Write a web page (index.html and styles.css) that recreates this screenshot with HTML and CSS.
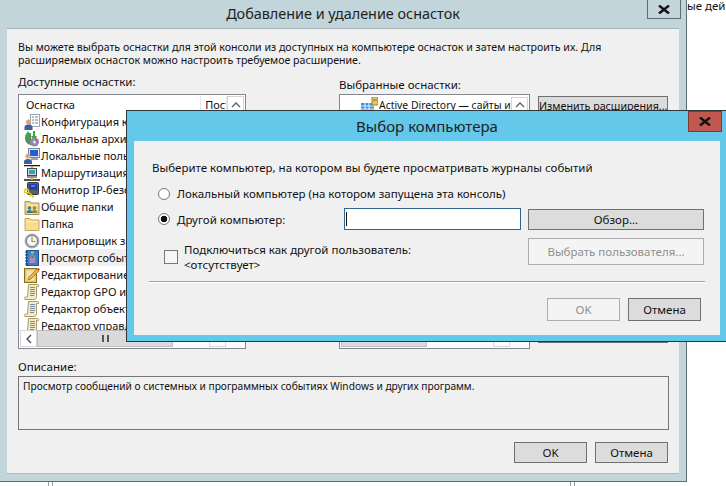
FILE: index.html
```html
<!DOCTYPE html>
<html lang="ru">
<head>
<meta charset="utf-8">
<title>Добавление и удаление оснасток</title>
<link rel="stylesheet" href="styles.css">
</head>
<body>
<svg class="defs" width="0" height="0" aria-hidden="true">
  <symbol id="i-config" viewBox="0 0 16 16">
    <rect x="6.5" y="0.5" width="9" height="12" fill="#fff" stroke="#9aa5b5"/>
    <path d="M8 3h2M11 3h3M8 6h2M11 6h3M8 9h2M11 9h3" stroke="#6b7c9a"/>
    <circle cx="4.5" cy="8" r="2.6" fill="#d9a878"/>
    <path d="M0.5 16v-3c0-1.500 1.500-2.500 4-2.500s4 1 4 2.500v3z" fill="#3d5f9c"/>
  </symbol>
  <symbol id="i-archive" viewBox="0 0 16 16">
    <path d="M1 7c0-3 3-5 6-5v12c-3 0-6-3-6-7z" fill="#6d7f6c"/>
    <path d="M4 0l3 5H5v6H3V5H1z" fill="#27b33a"/>
    <path d="M10 10l-3-5h2V0h2v5h2z" fill="#27b33a"/>
    <circle cx="10.500" cy="11" r="4.500" fill="#8a8fa8"/>
    <circle cx="10.500" cy="11" r="1.500" fill="#e8e8f0"/>
    <path d="M10.500 7a4 4 0 0 1 4 4h-2.500z" fill="#c95f8c"/>
  </symbol>
  <symbol id="i-users" viewBox="0 0 16 16">
    <rect x="4.500" y="0.500" width="11" height="9" fill="#dfe3ea" stroke="#7c8698"/>
    <rect x="6" y="2" width="8" height="6" fill="#1f5fd6"/>
    <rect x="7" y="10" width="7" height="2" fill="#9aa3b2"/>
    <circle cx="4" cy="8" r="2.600" fill="#d9a878"/>
    <path d="M0 16v-2.500c0-1.500 1.500-2.500 4-2.500s4 1 4 2.500V16z" fill="#3d5f9c"/>
  </symbol>
  <symbol id="i-route" viewBox="0 0 16 16">
    <path d="M0 0.500h16M0 15h16" stroke="#1a1a1a" stroke-width="1.500"/>
    <path d="M8 1v2M8 12v3" stroke="#d8b400" stroke-width="2"/>
    <rect x="3.500" y="3.500" width="9" height="7" fill="#d5d8dd" stroke="#40464f"/>
    <rect x="5" y="5" width="6" height="4" fill="#27a7b8"/>
    <rect x="3" y="11" width="10" height="2" fill="#8a8f98"/>
  </symbol>
  <symbol id="i-monitor" viewBox="0 0 16 16">
    <rect x="3.500" y="0.500" width="11" height="12" rx="1" fill="#5a5f68" stroke="#33373d"/>
    <rect x="5" y="2" width="8" height="6" fill="#1f3fb0"/>
    <path d="M7 4h4" stroke="#8fb0ff"/>
    <circle cx="2.500" cy="9" r="2" fill="none" stroke="#e2cf1d" stroke-width="1.500"/>
    <path d="M4 10l6 5M7 13l-1 1.500M9 14.500l-1 1" stroke="#e2cf1d" stroke-width="1.500"/>
  </symbol>
  <symbol id="i-shared" viewBox="0 0 16 16">
    <path d="M1 2.500h5l1 1.500h8v11.500H1z" fill="#f0d68a" stroke="#b0904a"/>
    <path d="M2 6h12" stroke="#fbeebc"/>
    <circle cx="5.500" cy="9" r="1.700" fill="#3c7a8c"/>
    <path d="M2.500 14c0-2 1.300-3 3-3s3 1 3 3z" fill="#3c7a8c"/>
    <circle cx="10.500" cy="9" r="1.700" fill="#7d8a55"/>
    <path d="M7.500 14c0-2 1.300-3 3-3s3 1 3 3z" fill="#7d8a55"/>
  </symbol>
  <symbol id="i-folder" viewBox="0 0 16 16">
    <path d="M1 2.500h5l1 1.500h8v10.500H1z" fill="#f7dd8e" stroke="#c4a65c"/>
    <path d="M2 5.500h12" stroke="#fdf2c6"/>
  </symbol>
  <symbol id="i-clock" viewBox="0 0 16 16">
    <circle cx="8" cy="8" r="7.500" fill="#a9adb3"/>
    <circle cx="8" cy="8" r="5.500" fill="#fafafa" stroke="#6f747b"/>
    <path d="M8 4v4.500h3.500" fill="none" stroke="#b58a24" stroke-width="1.200"/>
  </symbol>
  <symbol id="i-events" viewBox="0 0 16 16">
    <rect x="2.500" y="0.500" width="12" height="15" fill="#3f7fc9" stroke="#27558f"/>
    <path d="M1 2h3M1 5h3M1 8h3M1 11h3M1 14h3" stroke="#1d3c66"/>
    <rect x="5.500" y="8" width="6" height="5" fill="#a88bb8"/>
    <path d="M6.800 8V6.500c0-2 3.400-2 3.400 0V8" fill="none" stroke="#c9a83d"/>
    <path d="M7 2.500h3" stroke="#8fd0a0" stroke-width="2"/>
  </symbol>
  <symbol id="i-edit" viewBox="0 0 16 16">
    <rect x="0.500" y="1.500" width="12" height="14" fill="#e3c66e" stroke="#8a6d1e"/>
    <rect x="2.500" y="3.500" width="8" height="10" fill="#f3e5ad"/>
    <path d="M4 13l1-3 8-8 2 2-8 8z" fill="#e8b24a" stroke="#7a5a1c" stroke-width="0.600"/>
    <path d="M13 2l1-1.500 2 2-1.500 1.500z" fill="#d9483f"/>
  </symbol>
  <symbol id="i-scroll" viewBox="0 0 16 16">
    <path d="M4.500 0.500h9c1 0 1.500 1 1 2h-2v10c0 2-1 3-2.500 3h-9c-1 0-1.500-2 .5-2.500h2z" fill="#f4ecc8" stroke="#a69a6e"/>
    <path d="M6 3.500h5M6 5.500h5M6 7.500h5M6 9.500h5M6 11.500h4" stroke="#7d8a9c"/>
  </symbol>
  <symbol id="i-ad" viewBox="0 0 18 16">
    <path d="M1 6h13v10H1z" fill="#3f8fe0"/>
    <path d="M1 9h13M1 12h13M5 6v10M9 6v10" stroke="#e6f2ff"/>
    <rect x="12" y="0" width="6" height="8" fill="#e8c662" stroke="#a38534"/>
    <path d="M13 3h4" stroke="#8a6f24"/>
  </symbol>
</svg>

<p class="behind-text">ые дей</p>
<span class="stub stub-left"></span>
<span class="stub stub-right"></span>

<section class="window">
  <header class="titlebar">
    <h1 class="title">Добавление и удаление оснасток</h1>
    <span class="close-btn"><svg width="14" height="9" viewBox="0 0 14 9"><path d="M2 0.500l10 8M12 0.500l-10 8" stroke="#111" stroke-width="2.400"/></svg></span>
  </header>
  <div class="panel">
    <p class="intro">Вы можете выбрать оснастки для этой консоли из доступных на компьютере оснасток и затем настроить их. Для<br>расширяемых оснасток можно настроить требуемое расширение.</p>
    <div class="columns">
      <div class="col col-left">
        <div class="col-label">Доступные оснастки:</div>
        <div class="list list-left">
          <div class="list-head">
            <span class="th th-name">Оснастка</span>
            <span class="th th-vendor">Пост</span>
            <span class="scroll-up"><svg width="10" height="6" viewBox="0 0 10 6"><path d="M1 5l4-4 4 4" fill="none" stroke="#606060" stroke-width="1.300"/></svg></span>
          </div>
          <ul class="rows">
            <li class="row"><svg class="ico"><use href="#i-config"/></svg><span>Конфигурация клиента</span></li>
            <li class="row"><svg class="ico"><use href="#i-archive"/></svg><span>Локальная архивация</span></li>
            <li class="row"><svg class="ico"><use href="#i-users"/></svg><span>Локальные пользователи</span></li>
            <li class="row"><svg class="ico"><use href="#i-route"/></svg><span>Маршрутизация и доступ</span></li>
            <li class="row"><svg class="ico"><use href="#i-monitor"/></svg><span>Монитор IP-безопасности</span></li>
            <li class="row"><svg class="ico"><use href="#i-shared"/></svg><span>Общие папки</span></li>
            <li class="row"><svg class="ico"><use href="#i-folder"/></svg><span>Папка</span></li>
            <li class="row"><svg class="ico"><use href="#i-clock"/></svg><span>Планировщик заданий</span></li>
            <li class="row row-active"><svg class="ico"><use href="#i-events"/></svg><span>Просмотр событий</span></li>
            <li class="row"><svg class="ico"><use href="#i-edit"/></svg><span>Редактирование объектов</span></li>
            <li class="row"><svg class="ico"><use href="#i-scroll"/></svg><span>Редактор GPO инфраструктуры</span></li>
            <li class="row"><svg class="ico"><use href="#i-scroll"/></svg><span>Редактор объектов</span></li>
            <li class="row"><svg class="ico"><use href="#i-scroll"/></svg><span>Редактор управления</span></li>
          </ul>
          <div class="hscroll">
            <span class="hs-arrow"><svg width="6" height="10" viewBox="0 0 6 10"><path d="M5 1L1 5l4 4" fill="none" stroke="#444" stroke-width="1.300"/></svg></span>
            <span class="hs-thumb"><span class="grip"></span></span>
            <span class="hs-track"></span>
            <span class="hs-end"></span>
          </div>
        </div>
      </div>
      <div class="col col-right">
        <div class="col-label col-label-low">Выбранные оснастки:</div>
        <div class="list list-right">
          <div class="list-head list-head-right">
            <svg class="ico-ad"><use href="#i-ad"/></svg>
            <span class="ad-text">Active Directory — сайты и</span>
            <span class="scroll-up"><svg width="10" height="6" viewBox="0 0 10 6"><path d="M1 5l4-4 4 4" fill="none" stroke="#606060" stroke-width="1.300"/></svg></span>
          </div>
          <div class="list-fill"></div>
          <div class="hscroll hscroll-right">
            <span class="hs-thumb-right"></span>
            <span class="hs-track"></span>
            <span class="hs-end"></span>
          </div>
        </div>
      </div>
      <div class="col col-actions">
        <button class="btn btn-wide" type="button">Изменить расширения...</button>
        <button class="btn btn-wide" type="button">Дополнительно...</button>
      </div>
    </div>
    <div class="desc-label">Описание:</div>
    <div class="desc-box">Просмотр сообщений о системных и программных событиях Windows и других программ.</div>
    <div class="footer">
      <button class="btn btn-foot" type="button">OK</button>
      <button class="btn btn-foot" type="button">Отмена</button>
    </div>
  </div>
</section>

<section class="dialog">
  <header class="dlg-titlebar">
    <h2 class="dlg-title">Выбор компьютера</h2>
    <span class="dlg-close"><svg width="14" height="9" viewBox="0 0 14 9"><path d="M2 0.500l10 8M12 0.500l-10 8" stroke="#111" stroke-width="2.400"/></svg></span>
  </header>
  <div class="dlg-panel">
    <p class="dlg-intro">Выберите компьютер, на котором вы будете просматривать журналы событий</p>
    <div class="opt">
      <span class="radio"></span>
      <span>Локальный компьютер (на котором запущена эта консоль)</span>
    </div>
    <div class="opt opt-other">
      <span class="radio radio-on"></span>
      <span class="opt-label">Другой компьютер:</span>
      <span class="input"><span class="caret"></span></span>
      <button class="btn btn-browse" type="button">Обзор...</button>
    </div>
    <div class="opt-user">
      <span class="check"></span>
      <span class="user-label">Подключиться как другой пользователь:<br>&lt;отсутствует&gt;</span>
      <button class="btn btn-browse btn-off btn-user" type="button">Выбрать пользователя...</button>
    </div>
    <div class="sep"></div>
    <div class="dlg-footer">
      <button class="btn btn-foot btn-off btn-tall" type="button">OK</button>
      <button class="btn btn-foot btn-tall" type="button">Отмена</button>
    </div>
  </div>
</section>
</body>
</html>
```
FILE: styles.css
```css
* { box-sizing: border-box; }
html, body { margin: 0; padding: 0; }
body {
  position: relative;
  width: 726px;
  height: 486px;
  overflow: hidden;
  background: #fff;
  font-family: "Noto Sans", sans-serif;
  font-size: 11.5px;
  line-height: 13px;
  color: #111;
}
.defs { position: absolute; width: 0; height: 0; }
.behind-text { position: absolute; left: 687px; top: -1px; margin: 0; white-space: nowrap; }
.stub { position: absolute; top: 481px; width: 5px; height: 5px; border: 1px solid #9a9a9a; border-top: 0; border-bottom: 0; }
.stub-left { left: 48px; }
.stub-right { left: 570px; }

/* back window */
.window {
  position: absolute;
  left: 0;
  top: 0;
  width: 687px;
  height: 482px;
  background: #c2d5db;
  border-right: 1px solid #5f6d72;
  border-bottom: 1px solid #5f6d72;
  display: flex;
  flex-direction: column;
  padding: 0 7px 7px;
}
.titlebar { position: relative; height: 28px; flex: none; }
.title {
  margin: 0;
  font-size: 14.4px;
  font-weight: 400;
  line-height: 28px;
  text-align: center;
  color: #222;
}
.close-btn {
  position: absolute;
  left: 640px;
  top: -1px;
  width: 34px;
  height: 20px;
  background: #c2d5db;
  border: 1px solid #5f6d72;
  display: flex;
  align-items: center;
  justify-content: center;
}
.panel {
  flex: 1;
  background: #f0f0f0;
  border-top: 1px solid #a6b3b9;
  border-bottom: 1px solid #a9bcc3;
  padding: 12px 10px 0 11px;
  display: flex;
  flex-direction: column;
}
.intro { margin: 0; white-space: nowrap; font-size: 10.6px; }
.columns {
  display: grid;
  grid-template-columns: 228px 276px 130px;
  column-gap: 8px;
  margin-top: 8px;
}
.col-right { margin-left: 85px; width: 191px; }
.col-label { height: 19px; line-height: 13px; }
.col-label-low { padding-top: 3px; }
.list {
  height: 255px;
  background: #fff;
  border: 1px solid #828790;
  display: flex;
  flex-direction: column;
  padding: 1px;
  overflow: hidden;
  font-size: 11px;
}
.list-head { display: flex; height: 17px; flex: none; align-items: center; }
.th { height: 17px; line-height: 17px; background: #fff; border-right: 1px solid #e5e5e5; }
.th-name { width: 181px; padding-left: 5px; margin-left: 1px; }
.th-vendor { width: 26px; padding-left: 4px; overflow: hidden; white-space: nowrap; }
.scroll-up {
  width: 17px;
  height: 17px;
  margin-left: auto;
  background: #fff;
  border: 1px solid #d5d5d5;
  display: flex;
  align-items: center;
  justify-content: center;
}
.rows {
  list-style: none;
  margin: 0;
  padding: 0 0 0 4px;
  flex: 1;
  overflow: hidden;
}
.row {
  height: 17px;
  display: flex;
  align-items: center;
  gap: 1px;
  white-space: nowrap;
}
.row > span { flex: 1; height: 17px; line-height: 17px; }
.row-active > span { background: #f0f0f0; }
.ico { width: 16px; height: 16px; flex: none; }
.ico-ad { width: 18px; height: 16px; flex: none; margin-left: 19px; }
.list-head-right { height: 18px; }
.ad-text { white-space: nowrap; padding-left: 1px; width: 133px; overflow: hidden; line-height: 17px; font-size: 10.4px; }
.list-fill { flex: 1; }
.hscroll { display: flex; height: 17px; flex: none; }
.hs-arrow {
  width: 17px;
  background: #fff;
  border: 1px solid #d5d5d5;
  display: flex;
  align-items: center;
  justify-content: center;
}
.hs-thumb {
  width: 136px;
  background: #dadada;
  border: 1px solid #bdbdbd;
  display: flex;
  align-items: center;
  justify-content: center;
}
.grip { width: 7px; height: 7px; border-left: 2px solid #555; border-right: 2px solid #555; }
.hs-track { flex: 1; background: #fff; }
.hs-end { width: 17px; background: #fff; border: 1px solid #d5d5d5; margin-right: 18px; }
.hs-thumb-right { width: 86px; background: #dadada; border: 1px solid #bdbdbd; }
.col-actions { display: flex; flex-direction: column; justify-content: space-between; padding-top: 21px; height: 271px; padding-bottom: 3px; }
.btn {
  font: inherit;
  color: #111;
  background: #dcdcdc;
  border: 1px solid #707070;
  border-radius: 0;
  padding: 0;
  display: block;
  white-space: nowrap;
}
.btn-wide { width: 130px; height: 21px; font-size: 10.7px; }
.desc-label { margin-top: 11px; height: 15px; }
.desc-box {
  height: 54px;
  margin-top: 1px;
  width: 651px;
  border: 1px solid #767676;
  padding: 3px 4px;
  font-size: 10.2px;
}
.footer {
  display: flex;
  gap: 8px;
  justify-content: flex-end;
  margin-top: 12px;
  width: 650px;
}
.btn-foot { width: 73px; height: 21px; }

/* front dialog */
.dialog {
  position: absolute;
  left: 126px;
  top: 110px;
  width: 610px;
  height: 232px;
  background: #63c8e9;
  border: 1px solid #2c373d;
  padding: 0 15px 6px 7px;
  display: flex;
  flex-direction: column;
}
.dlg-titlebar { position: relative; height: 30px; flex: none; }
.dlg-title {
  margin: 0;
  font-size: 15px;
  font-weight: 400;
  line-height: 30px;
  text-align: center;
  color: #222;
}
.dlg-close {
  position: absolute;
  left: 554px;
  top: 0;
  width: 34px;
  height: 21px;
  background: #c0584f;
  border: 1px solid #7f3a35;
  display: flex;
  align-items: center;
  justify-content: center;
}
.dlg-panel {
  flex: 1;
  background: #f0f0f0;
  padding: 20px 15px 0 18px;
  display: flex;
  flex-direction: column;
}
.dlg-intro { margin: 0; }
.opt { display: flex; align-items: center; margin-top: 13px; padding-left: 6px; gap: 7px; }
.opt-other { margin-top: 8px; height: 22px; }
.radio {
  width: 12px;
  height: 12px;
  flex: none;
  border-radius: 50%;
  background: #fff;
  border: 1px solid #777;
  display: block;
}
.radio-on { background: radial-gradient(circle, #111 0 3px, #fff 3.6px); }
.opt-label { width: 160px; flex: none; }
.input {
  width: 177px;
  height: 22px;
  flex: none;
  background: #fff;
  border: 1px solid #2f6690;
  padding: 3px 1px;
  display: block;
}
.caret { display: block; width: 1px; height: 14px; background: #111; }
.btn-browse { width: 176px; height: 21px; flex: none; }
.opt-user { display: flex; align-items: flex-start; margin-top: 8px; padding-left: 12px; }
.check {
  width: 14px;
  height: 14px;
  flex: none;
  background: #f6f6f6;
  border: 1px solid #777;
  margin-top: 12px;
}
.user-label { width: 350px; flex: none; padding-left: 6px; line-height: 15px; padding-top: 4px; }
.btn-off { background: #f4f4f4; border-color: #adadad; color: #8f8f8f; }
.btn-user { height: 27px; }
.sep { height: 2px; background: #fff; border-top: 1px solid #a0a0a0; margin-top: 9px; margin-left: -3px; width: 556px; }
.dlg-footer { display: flex; gap: 8px; justify-content: flex-end; margin-top: 15px; width: 549px; }
.btn-tall { width: 73px; height: 23px; }
```
